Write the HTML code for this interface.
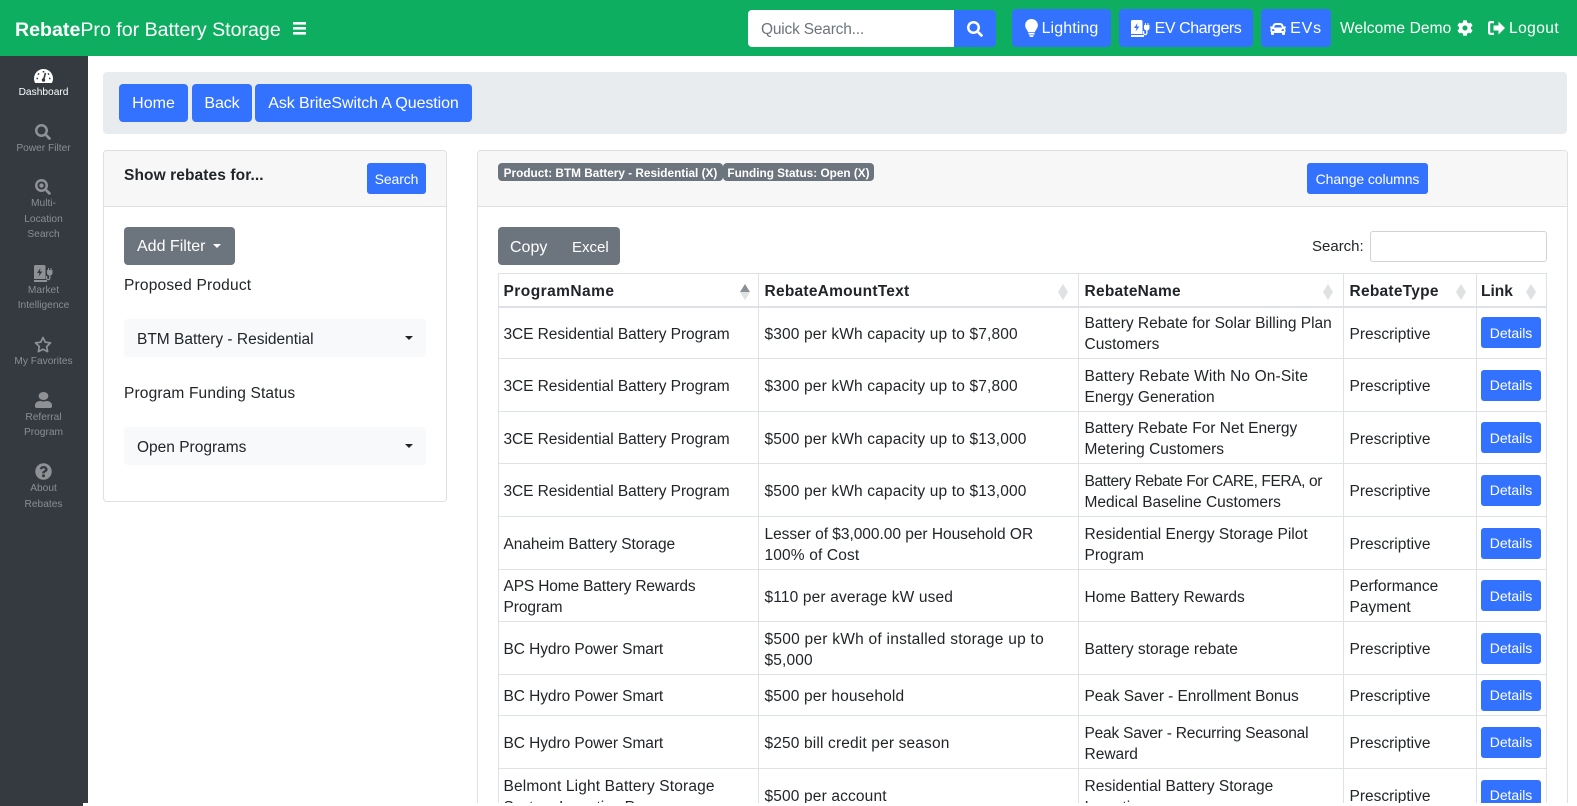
<!DOCTYPE html>
<html lang="en"><head><meta charset="utf-8"><title>RebatePro for Battery Storage</title>
<style>
*{box-sizing:border-box}
html,body{margin:0;padding:0;width:1577px;height:806px;overflow:hidden;background:#fff}
body{font-family:"Liberation Sans",sans-serif;font-size:16px;color:#212529;position:relative}
.a{position:absolute}
.btn{position:absolute;background:#3372ff;color:#fff;border-radius:4px;display:flex;align-items:center;justify-content:center;white-space:nowrap;font-size:16px;padding-top:2px}
.sm{font-size:14px;border-radius:3px;padding-top:1px;letter-spacing:-.1px}
.nav{left:0;top:0;width:1577px;height:56px;background:#0eae60}
.t{position:absolute;white-space:nowrap;line-height:20px}
.side{left:0;top:56px;width:88px;height:750px;background:#343a40}
.sl{position:absolute;left:0;width:87px;text-align:center;font-size:10.2px;line-height:14px;color:#8b8e91;white-space:nowrap}
.si{position:absolute;fill:#8f9194}
.card{position:absolute;border:1px solid #dfdfdf;border-radius:4px;background:#fff}
.ch{position:absolute;left:0;top:0;right:0;height:56px;background:#f7f7f7;border-bottom:1px solid #dfdfdf;border-radius:3px 3px 0 0}
.dd{position:absolute;left:124px;width:302px;height:38px;background:#f8f9fa;border-radius:4px;font-size:15.5px;line-height:41px;padding-left:13px}
.caret{position:absolute;width:0;height:0;border-left:4.5px solid transparent;border-right:4.5px solid transparent;border-top:4.5px solid currentColor}
.badge{position:absolute;top:163px;height:18px;background:#6c757d;color:#fff;border-radius:4px;font-size:11.8px;font-weight:bold;line-height:20px;text-align:center;white-space:nowrap}
table{position:absolute;left:498px;top:273px;width:1048px;table-layout:fixed;border-collapse:collapse;font-size:15.5px;line-height:21px}
td,th{border:1px solid #dee2e6;padding:3px 5.5px 0;vertical-align:middle;text-align:left;position:relative}
td:last-child{padding-top:0}
td:nth-child(1),th:nth-child(1){padding-left:4.5px}
td:nth-child(1){letter-spacing:-.07px}
td:nth-child(2){letter-spacing:.15px}
th{font-weight:bold;border-bottom:2px solid #dee2e6;height:33px;font-size:15.5px;letter-spacing:.25px}
th:first-child{letter-spacing:.45px}
th:last-child{padding-left:4px;letter-spacing:0}
td .d{background:#3372ff;color:#fff;width:60px;height:31px;border-radius:3px;font-size:14px;display:flex;align-items:center;justify-content:center;margin-left:-1.5px;padding-top:1px;letter-spacing:-.05px}
.sort{position:absolute;right:10px;top:10px;width:10px;height:16px}
.sort:before,.sort:after{content:"";position:absolute;left:0;border-left:5px solid transparent;border-right:5px solid transparent}
.sort:before{top:0;border-bottom:8px solid #dfe1e3}
.sort:after{bottom:0;border-top:8px solid #dfe1e3}
.sort.up{right:8px}
.sort.up:before{border-bottom-color:#8b9096}
</style></head><body>

<div class="a nav"></div>
<div class="t" style="left:15px;top:19px;font-size:19.6px;line-height:22px;color:#fff"><b>Rebate</b>Pro for Battery Storage</div>
<svg class="a" style="left:293px;top:22px" width="13" height="13" viewBox="0 0 13 13" fill="#fff"><rect y="0" width="13" height="2.6" rx=".6"/><rect y="5" width="13" height="2.6" rx=".6"/><rect y="10" width="13" height="2.6" rx=".6"/></svg>

<div class="a" style="left:748px;top:10px;width:206px;height:37px;background:#fff;border-radius:4px 0 0 4px;color:#6c757d;font-size:15.5px;line-height:40px;padding-left:13px;letter-spacing:-.2px">Quick Search...</div>
<div class="btn" style="left:954px;top:10px;width:42px;height:37px;border-radius:0 4px 4px 0;padding-top:0"><svg width="16" height="16" viewBox="0 0 512 512" fill="#fff"><path d="M505 442.7L405.3 343c-4.5-4.5-10.6-7-17-7H372c27.6-35.3 44-79.7 44-128C416 93.1 322.9 0 208 0S0 93.1 0 208s93.1 208 208 208c48.3 0 92.7-16.4 128-44v16.3c0 6.4 2.5 12.5 7 17l99.7 99.7c9.4 9.4 24.6 9.4 33.9 0l28.3-28.3c9.4-9.4 9.4-24.6.1-34zM208 336c-70.7 0-128-57.2-128-128 0-70.7 57.2-128 128-128 70.7 0 128 57.2 128 128 0 70.7-57.2 128-128 128z"/></svg></div>

<div class="btn" style="left:1012px;top:9px;width:99px;height:38px;letter-spacing:.1px"><svg style="margin:-2px 4px 0 0" width="13" height="18" viewBox="0 0 12 17" fill="#fff"><path d="M6 0C2.7 0 0 2.6 0 5.8c0 3 2 4.2 2.8 6.7h6.4C10 10 12 8.8 12 5.8 12 2.6 9.3 0 6 0z"/><rect x="3.2" y="13.2" width="5.6" height="1.5"/><path d="M3.7 15.3h4.6L7.3 17H4.7z"/></svg>Lighting</div>
<div class="btn" style="left:1119px;top:9px;width:134px;height:38px;letter-spacing:-.45px"><svg style="margin:-2px 5px 0 0" width="19" height="17" viewBox="0 0 19 17" fill="#fff"><path fill-rule="evenodd" d="M1.5 0h8.5a1.5 1.5 0 0 1 1.5 1.5V14H0V1.5A1.5 1.5 0 0 1 1.5 0zM6.5 3L3 8h2.5l-1 3.5L8.5 6.500H6z"/><rect y="15" width="13" height="2"/><path d="M14 3h1v2h1.5V3h1v2h1v3a2.500 2.500 0 0 1-2 2.400V13a2.300 2.300 0 0 1-4.600 0v-2H13.200v2a1 1 0 0 0 2 0v-2.600A2.500 2.500 0 0 1 13 8V5h1z"/></svg>EV Chargers</div>
<div class="btn" style="left:1261px;top:9px;width:70px;height:38px;letter-spacing:.8px"><svg style="margin:-2px 4px 0 0" width="16" height="13" viewBox="0 0 512 416" fill="#fff"><path d="M499.990 144H440.100l-16.640-41.600C406.350 59.630 365.570 32 319.480 32H192.520c-46.080 0-86.870 27.630-103.990 70.400L71.890 144H12.010C4.200 144-1.530 151.340.37 158.910l6 24C7.700 188.250 12.500 192 18.010 192h20.070C24.660 203.730 16 220.800 16 240v48c0 16.120 6.160 30.670 16 41.930V384c0 17.670 14.330 32 32 32h32c17.670 0 32-14.330 32-32v-32h256v32c0 17.670 14.330 32 32 32h32c17.670 0 32-14.330 32-32v-54.070c9.840-11.250 16-25.800 16-41.930v-48c0-19.200-8.660-36.270-22.080-48h20.070c5.510 0 10.310-3.750 11.640-9.090l6-24C513.530 151.340 507.800 144 499.990 144zM148.950 126.170C156.240 107.950 173.890 96 192.520 96h126.960c18.630 0 36.280 11.950 43.570 30.170L383.020 176H128.980zM96 287.840c-19.200 0-32-12.760-32-31.920S76.800 224 96 224s48 28.720 48 47.880-28.800 15.960-48 15.960zm320 0c-19.200 0-48 3.190-48-15.960S396.800 224 416 224s32 12.760 32 31.920-12.800 31.920-32 31.920z"/></svg>EVs</div>

<div class="t" style="left:1340px;top:19px;color:#fff;font-size:15.5px;letter-spacing:.12px">Welcome Demo</div>
<svg class="a" style="left:1457px;top:20px" width="16" height="16" viewBox="0 0 512 512" fill="#fff"><path d="M487.400 315.700l-42.600-24.600c4.300-23.200 4.300-47 0-70.200l42.600-24.600c4.900-2.800 7.100-8.600 5.500-14-11.100-35.600-30-67.800-54.700-94.600-3.800-4.100-10-5.100-14.800-2.300L380.800 110c-17.900-15.400-38.500-27.300-60.800-35.100V25.800c0-5.600-3.900-10.500-9.400-11.700-36.700-8.200-74.300-7.800-109.200 0-5.500 1.200-9.400 6.100-9.400 11.700V75c-22.200 7.900-42.800 19.800-60.800 35.100L88.700 85.500c-4.900-2.800-11-1.900-14.800 2.300-24.700 26.700-43.600 58.900-54.700 94.600-1.700 5.400.6 11.200 5.500 14L67.300 221c-4.300 23.200-4.300 47 0 70.200l-42.600 24.600c-4.900 2.800-7.100 8.600-5.500 14 11.100 35.600 30 67.800 54.700 94.600 3.800 4.100 10 5.100 14.800 2.300l42.600-24.600c17.900 15.400 38.500 27.300 60.800 35.100v49.200c0 5.600 3.900 10.500 9.400 11.700 36.700 8.200 74.300 7.800 109.200 0 5.500-1.200 9.400-6.100 9.400-11.700v-49.200c22.200-7.900 42.800-19.800 60.800-35.100l42.600 24.600c4.900 2.800 11 1.900 14.800-2.300 24.700-26.700 43.600-58.900 54.700-94.600 1.500-5.500-.7-11.300-5.600-14.100zM256 336c-44.100 0-80-35.900-80-80s35.900-80 80-80 80 35.900 80 80-35.900 80-80 80z"/></svg>
<svg class="a" style="left:1488px;top:21px" width="17" height="14" viewBox="0 0 17 14" fill="#fff"><path d="M17 7l-6.500-6.500v4H5.500v5h5v4z"/><path d="M6 0H2.500A2.500 2.500 0 0 0 0 2.500v9A2.500 2.500 0 0 0 2.500 14H6v-2.300H2.800a.6.6 0 0 1-.6-.6V2.900c0-.3.3-.6.6-.6H6z"/></svg>
<div class="t" style="left:1509px;top:19px;color:#fff;font-size:15.5px;letter-spacing:.45px">Logout</div>

<div class="a side"></div>
<svg class="a" style="left:34px;top:69px" width="19" height="14" viewBox="0 0 19 14"><path fill="#fff" d="M9.500 0A9.500 9.500 0 0 0 0 9.500c0 1.700.4 3.200 1.200 4.500h16.600c.8-1.300 1.200-2.800 1.200-4.500A9.500 9.500 0 0 0 9.500 0z"/><path stroke="#343a40" stroke-width="1.600" fill="none" d="M9.500 11L11.500 4M9.500 2v1.500M4 4.500l1 1M15 4.500l-1 1M2.500 9.500h1.500M15 9.500h1.500"/><circle cx="9.500" cy="11" r="1.700" fill="#343a40"/></svg>
<div class="sl" style="top:86px;color:#fff">Dashboard</div>
<svg class="si" style="left:35px;top:124px" width="16" height="16" viewBox="0 0 512 512"><path d="M505 442.700L405.300 343c-4.500-4.500-10.600-7-17-7H372c27.600-35.300 44-79.700 44-128C416 93.100 322.900 0 208 0S0 93.100 0 208s93.100 208 208 208c48.300 0 92.700-16.400 128-44v16.300c0 6.400 2.500 12.500 7 17l99.700 99.700c9.400 9.400 24.600 9.400 33.900 0l28.300-28.300c9.400-9.400 9.400-24.600.1-34zM208 336c-70.700 0-128-57.200-128-128 0-70.700 57.200-128 128-128 70.700 0 128 57.200 128 128 0 70.700-57.200 128-128 128z"/></svg>
<div class="sl" style="top:142px">Power Filter</div>
<svg class="si" style="left:35px;top:179px" width="16" height="16" viewBox="0 0 512 512"><path d="M505 442.700L405.300 343c-4.500-4.500-10.600-7-17-7H372c27.600-35.300 44-79.700 44-128C416 93.100 322.900 0 208 0S0 93.100 0 208s93.100 208 208 208c48.300 0 92.700-16.400 128-44v16.300c0 6.400 2.500 12.500 7 17l99.700 99.700c9.400 9.400 24.600 9.400 33.900 0l28.300-28.300c9.400-9.400 9.400-24.600.1-34zM208 336c-70.700 0-128-57.200-128-128 0-70.700 57.200-128 128-128 70.700 0 128 57.200 128 128 0 70.700-57.200 128-128 128z"/><circle cx="208" cy="208" r="70"/></svg>
<div class="sl" style="top:197px">Multi-</div>
<div class="sl" style="top:213px">Location</div>
<div class="sl" style="top:228px">Search</div>
<svg class="si" style="left:34px;top:265px" width="19" height="17" viewBox="0 0 19 17"><path fill-rule="evenodd" d="M1.500 0h8.500a1.500 1.500 0 0 1 1.500 1.500V14H0V1.500A1.500 1.500 0 0 1 1.500 0zM6.500 3L3 8h2.500l-1 3.500L8.500 6.500H6z"/><rect y="15" width="13" height="2"/><path d="M14 3h1v2h1.500V3h1v2h1v3a2.500 2.500 0 0 1-2 2.400V13a2.300 2.300 0 0 1-4.600 0v-2H13.200v2a1 1 0 0 0 2 0v-2.600A2.500 2.500 0 0 1 13 8V5h1z"/></svg>
<div class="sl" style="top:284px">Market</div>
<div class="sl" style="top:299px">Intelligence</div>
<svg class="a" style="left:34px;top:336px" width="18" height="17" viewBox="0 0 18 17"><path fill="none" stroke="#8f9194" stroke-width="1.700" stroke-linejoin="round" d="M9 1.500l2.300 4.700 5.200.7-3.800 3.600.9 5.100L9 13.200l-4.600 2.400.9-5.100L1.500 6.900l5.200-.7z"/></svg>
<div class="sl" style="top:355px">My Favorites</div>
<svg class="si" style="left:35px;top:392px" width="17" height="16" viewBox="0 0 448 512" preserveAspectRatio="none"><path d="M224 256c70.700 0 128-57.300 128-128S294.700 0 224 0 96 57.300 96 128s57.300 128 128 128zm89.600 32h-16.700c-22.200 10.200-46.900 16-72.900 16s-50.600-5.800-72.900-16h-16.700C60.200 288 0 348.200 0 422.400V464c0 26.500 21.500 48 48 48h352c26.500 0 48-21.500 48-48v-41.600c0-74.200-60.200-134.400-134.400-134.400z"/></svg>
<div class="sl" style="top:411px">Referral</div>
<div class="sl" style="top:426px">Program</div>
<svg class="si" style="left:35px;top:463px" width="17" height="17" viewBox="0 0 512 512"><path d="M504 256c0 136.997-111.043 248-248 248S8 392.997 8 256C8 119.083 119.043 8 256 8s248 111.083 248 248zM262.655 90c-54.497 0-89.255 22.957-116.549 63.758-3.536 5.286-2.353 12.415 2.715 16.258l34.699 26.310c5.205 3.947 12.621 3.008 16.665-2.122 17.864-22.658 30.113-35.797 57.303-35.797 20.429 0 45.698 13.148 45.698 32.958 0 14.976-12.363 22.667-32.534 33.976C247.128 238.528 216 254.941 216 296v4c0 6.627 5.373 12 12 12h56c6.627 0 12-5.373 12-12v-1.333c0-28.462 83.186-29.647 83.186-106.667 0-58.002-60.165-102-116.531-102zM256 338c-25.365 0-46 20.635-46 46 0 25.364 20.635 46 46 46s46-20.636 46-46c0-25.365-20.635-46-46-46z"/></svg>
<div class="sl" style="top:482px">About</div>
<div class="sl" style="top:498px">Rebates</div>

<div class="a" style="left:103px;top:72px;width:1464px;height:62px;background:#e9ecef;border-radius:4px"></div>
<div class="btn" style="left:119px;top:84px;width:69px;height:38px">Home</div>
<div class="btn" style="left:192px;top:84px;width:60px;height:38px;letter-spacing:-.1px">Back</div>
<div class="btn" style="left:255px;top:84px;width:217px;height:38px;letter-spacing:-.1px">Ask BriteSwitch A Question</div>

<div class="card" style="left:103px;top:150px;width:344px;height:352px"><div class="ch"></div></div>
<div class="t" style="left:124px;top:166px;font-weight:bold;font-size:15.5px;letter-spacing:.1px">Show rebates for...</div>
<div class="btn sm" style="left:367px;top:163px;width:59px;height:31px">Search</div>
<div class="btn" style="left:124px;top:227px;width:111px;height:38px;background:#6c757d;justify-content:flex-start;padding-left:13px">Add Filter<span class="caret" style="left:89px;top:17px"></span></div>
<div class="t" style="left:124px;top:275.5px;font-size:15.5px;letter-spacing:.2px">Proposed Product</div>
<div class="dd" style="top:319px">BTM Battery - Residential<span class="caret" style="left:281px;top:17px;color:#212529"></span></div>
<div class="t" style="left:124px;top:383.5px;font-size:15.5px;letter-spacing:.15px">Program Funding Status</div>
<div class="dd" style="top:427px">Open Programs<span class="caret" style="left:281px;top:17px;color:#212529"></span></div>

<div class="card" style="left:477px;top:150px;width:1091px;height:680px"><div class="ch"></div></div>
<div class="badge" style="left:498px;width:225px">Product: BTM Battery - Residential (X)</div>
<div class="badge" style="left:723px;width:151px">Funding Status: Open (X)</div>
<div class="btn sm" style="left:1307px;top:163px;width:121px;height:31px">Change columns</div>
<div class="a" style="left:498px;top:227px;width:122px;height:38px;background:#6c757d;border-radius:4px"></div>
<div class="t" style="left:510px;top:237.5px;color:#fff;font-size:16px">Copy</div>
<div class="t" style="left:572px;top:237.5px;color:#fff;font-size:15px">Excel</div>
<div class="t" style="left:1312px;top:237px;font-size:15px">Search:</div>
<div class="a" style="left:1370px;top:231px;width:177px;height:31px;border:1px solid #ced4da;border-radius:3px;background:#fff"></div>

<table>
<colgroup><col style="width:260px"><col style="width:320px"><col style="width:265px"><col style="width:133px"><col style="width:70px"></colgroup>
<tr><th>ProgramName<span class="sort up"></span></th><th>RebateAmountText<span class="sort"></span></th><th>RebateName<span class="sort"></span></th><th>RebateType<span class="sort"></span></th><th>Link<span class="sort"></span></th></tr>
<tr style="height:52px"><td>3CE Residential Battery Program</td><td>$300 per kWh capacity up to $7,800</td><td>Battery Rebate for Solar Billing Plan Customers</td><td>Prescriptive</td><td><div class="d">Details</div></td></tr>
<tr style="height:53px"><td>3CE Residential Battery Program</td><td>$300 per kWh capacity up to $7,800</td><td><span style="letter-spacing:.13px">Battery Rebate With No On-Site</span> Energy Generation</td><td>Prescriptive</td><td><div class="d">Details</div></td></tr>
<tr style="height:52px"><td>3CE Residential Battery Program</td><td>$500 per kWh capacity up to $13,000</td><td>Battery Rebate For Net Energy Metering Customers</td><td>Prescriptive</td><td><div class="d">Details</div></td></tr>
<tr style="height:53px"><td>3CE Residential Battery Program</td><td>$500 per kWh capacity up to $13,000</td><td><span style="letter-spacing:-.4px">Battery Rebate For CARE, FERA, or</span> Medical Baseline Customers</td><td>Prescriptive</td><td><div class="d">Details</div></td></tr>
<tr style="height:53px"><td>Anaheim Battery Storage</td><td><span style="letter-spacing:-.03px">Lesser of $3,000.00 per Household OR</span> 100% of Cost</td><td>Residential Energy Storage Pilot Program</td><td>Prescriptive</td><td><div class="d">Details</div></td></tr>
<tr style="height:52px"><td><span style="letter-spacing:-.15px">APS Home Battery Rewards</span> Program</td><td>$110 per average kW used</td><td>Home Battery Rewards</td><td>Performance Payment</td><td><div class="d">Details</div></td></tr>
<tr style="height:53px"><td>BC Hydro Power Smart</td><td><span style="letter-spacing:.25px">$500 per kWh of installed storage up to</span> $5,000</td><td>Battery storage rebate</td><td>Prescriptive</td><td><div class="d">Details</div></td></tr>
<tr style="height:41px"><td>BC Hydro Power Smart</td><td>$500 per household</td><td><span style="letter-spacing:-.07px">Peak Saver - Enrollment Bonus</span></td><td>Prescriptive</td><td><div class="d">Details</div></td></tr>
<tr style="height:53px"><td>BC Hydro Power Smart</td><td>$250 bill credit per season</td><td><span style="letter-spacing:-.2px">Peak Saver - Recurring Seasonal</span> Reward</td><td>Prescriptive</td><td><div class="d">Details</div></td></tr>
<tr style="height:53px"><td><span style="letter-spacing:.15px">Belmont Light Battery Storage</span> System Incentive Program</td><td>$500 per account</td><td>Residential Battery Storage Incentive</td><td>Prescriptive</td><td><div class="d">Details</div></td></tr>
</table>
<div class="a" style="left:83px;top:803px;width:1494px;height:3px;background:#fff"></div>
</body></html>
